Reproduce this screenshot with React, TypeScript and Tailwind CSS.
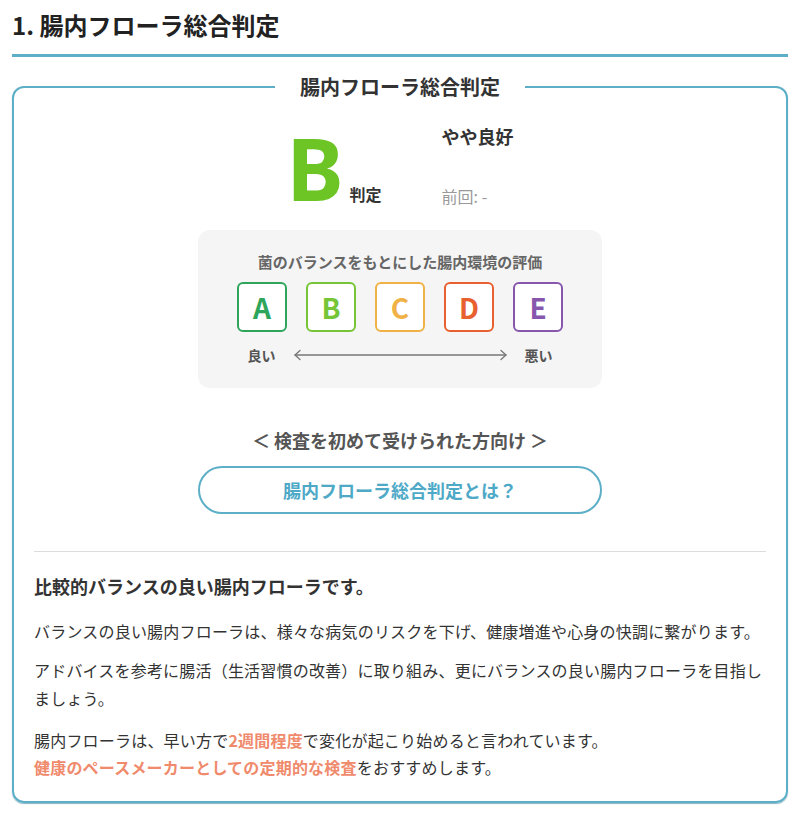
import React from "react"

const grades = [
  { letter: "A", color: "border-[#2ea55b] text-[#2ea55b]" },
  { letter: "B", color: "border-[#76c537] text-[#76c537]" },
  { letter: "C", color: "border-[#f0b247] text-[#f0b247]" },
  { letter: "D", color: "border-[#e8602f] text-[#e8602f]" },
  { letter: "E", color: "border-[#8657ad] text-[#8657ad]" },
]

function Arrow() {
  return (
    <svg width="213" height="12" viewBox="0 0 213 12" fill="none" stroke="#777" strokeWidth="1.3" strokeLinecap="round" strokeLinejoin="round">
      <path d="M1 6H212" />
      <path d="M6 1.5L1 6L6 10.5" />
      <path d="M207 1.5L212 6L207 10.5" />
    </svg>
  )
}

export default function App() {
  return (
    <div className="min-h-screen bg-white px-3 font-['Noto_Sans_CJK_JP','Noto_Sans',sans-serif] text-[#333]">
      <h1 className="pt-[7px] text-[24px] font-bold leading-[36px] text-[#222]">1. 腸内フローラ総合判定</h1>
      <div className="mt-[11px] h-[3px] bg-[#5cafc7]" />

      <section className="relative mt-[29px] rounded-[12px] border-2 border-[#5cafc7] px-5 pb-5 shadow-[0_1px_1px_rgba(60,130,150,0.6)]">
        <h2 className="absolute left-1/2 top-[-15px] -translate-x-1/2 bg-white px-[25px] text-[20px] font-bold leading-[28px] text-[#333]">
          腸内フローラ総合判定
        </h2>

        <div className="flex justify-center gap-[60px] pt-[37px]">
          <div className="flex items-baseline">
            <span className="font-['Noto_Sans',sans-serif] text-[86px] font-bold leading-none text-[#6cc524]">B</span>
            <span className="ml-[6px] text-[16px] font-bold text-[#333]">判定</span>
          </div>
          <div className="flex flex-col justify-between pb-[4px]">
            <p className="text-[18px] font-bold leading-[22px] text-[#333]">やや良好</p>
            <p className="text-[16px] leading-[22px] text-[#999]">前回: -</p>
          </div>
        </div>

        <div className="mx-auto mt-[19px] w-[404px] rounded-[12px] bg-[#f5f5f5] pb-[23px] pt-[22px]">
          <p className="text-center text-[15px] font-bold leading-[20px] text-[#666]">菌のバランスをもとにした腸内環境の評価</p>
          <div className="mt-[10px] flex justify-center gap-[19px]">
            {grades.map((g) => (
              <div
                key={g.letter}
                className={`flex h-[50px] w-[50px] items-center justify-center rounded-[6px] border-2 bg-white text-[28px] font-bold ${g.color}`}
              >
                {g.letter}
              </div>
            ))}
          </div>
          <div className="mt-[13px] flex items-center justify-center gap-[18px] text-[14px] font-bold leading-[20px] text-[#555]">
            <span>良い</span>
            <Arrow />
            <span>悪い</span>
          </div>
        </div>

        <p className="mt-[39px] text-center text-[18px] font-bold leading-[26px] text-[#555]">＜ 検査を初めて受けられた方向け ＞</p>
        <button className="mx-auto mt-[13px] flex h-[48px] w-[404px] items-center justify-center rounded-full border-2 border-[#5cafc7] bg-white text-[18px] font-bold text-[#4ea9c7]">
          腸内フローラ総合判定とは？
        </button>

        <div className="mt-[37px] h-px bg-[#ddd]" />

        <h3 className="mt-[21px] text-[18px] font-bold leading-[26px] text-[#333]">比較的バランスの良い腸内フローラです。</h3>
        <p className="mt-[18px] text-[16px] leading-[28px] tracking-[0.2px]">
          バランスの良い腸内フローラは、様々な病気のリスクを下げ、健康増進や心身の快調に繋がります。
        </p>
        <p className="mt-[11px] text-[16px] leading-[28px] tracking-[0.2px]">
          アドバイスを参考に腸活（生活習慣の改善）に取り組み、更にバランスの良い腸内フローラを目指しましょう。
        </p>
        <p className="mt-[15px] text-[16px] leading-[27px] tracking-[0.2px]">
          腸内フローラは、早い方で<span className="font-bold text-[#f08a6c]">2週間程度</span>で変化が起こり始めると言われています。
          <br />
          <span className="font-bold text-[#f08a6c]">健康のペースメーカーとしての定期的な検査</span>をおすすめします。
        </p>
      </section>
    </div>
  )
}
